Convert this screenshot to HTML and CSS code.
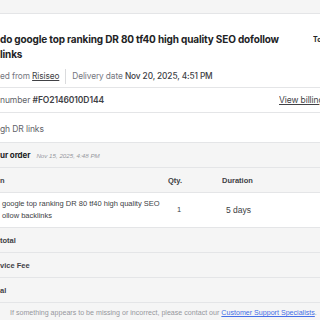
FILE: index.html
```html
<!DOCTYPE html>
<html>
<head>
<meta charset="utf-8">
<link rel="stylesheet" href="styles.css">
</head>
<body>
<div class="topbar"></div>
<header class="head">
  <div class="title-row">
    <h1 class="title">do google top ranking DR 80 tf40 high quality SEO dofollow<br>links</h1>
    <span class="to">To</span>
  </div>
  <div class="meta">
    <span class="meta-item">ed from <a class="seller" href="#">Risiseo</a></span>
    <span class="sep"></span>
    <span class="meta-item">Delivery date <span class="strong">Nov 20, 2025, 4:51 PM</span></span>
  </div>
</header>
<div class="row row-number">
  <span>number <span class="strong">#FO2146010D144</span></span>
  <a class="billing" href="#">View billing</a>
</div>
<div class="row row-pkg">gh DR links</div>
<section class="order">
  <div class="order-head"><span class="order-title">ur order</span><span class="order-date">Nov 15, 2025, 4:48 PM</span></div>
  <div class="table">
    <div class="tr th">
      <div class="c-item">n</div>
      <div class="c-qty">Qty.</div>
      <div class="c-dur">Duration</div>
    </div>
    <div class="tr item">
      <div class="c-item">google top ranking DR 80 tf40 high quality SEO<br>ollow backlinks</div>
      <div class="c-qty">1</div>
      <div class="c-dur">5 days</div>
    </div>
    <div class="tr sum">total</div>
    <div class="tr sum">vice Fee</div>
    <div class="tr sum">al</div>
  </div>
  <p class="footer">If something appears to be missing or incorrect, please contact our <a class="support" href="#">Customer Support Specialists</a>.</p>
</section>
</body>
</html>
```
FILE: styles.css
```css
html, body { margin: 0; padding: 0; }
body {
  width: 320px;
  height: 320px;
  overflow: hidden;
  background: #fff;
  font-family: Inter, "Liberation Sans", sans-serif;
  color: #404145;
}
.topbar {
  height: 13px;
  background: #f5f5f5;
  border-bottom: 1px solid #e4e5e7;
}
.head { padding: 18px 0 0 0; }
.title-row { display: flex; justify-content: space-between; }
.title {
  margin: 0;
  font-size: 10px;
  line-height: 15px;
  font-weight: 700;
  letter-spacing: -0.15px;
  color: #222325;
  white-space: nowrap;
}
.to {
  font-size: 7px;
  font-weight: 700;
  padding-top: 3px;
  color: #222325;
  white-space: nowrap;
  overflow: hidden;
  width: 7px;
}
.meta {
  display: flex;
  align-items: center;
  height: 16px;
  margin-top: 6px;
  margin-bottom: 3px;
  font-size: 8.3px;
  letter-spacing: -0.1px;
  color: #74767e;
}
.seller { color: #404145; text-decoration: underline; }
.sep {
  width: 1px;
  height: 15px;
  background: #dadbdd;
  margin: 0 6px;
}
.strong { color: #404145; font-weight: 500; }
.row {
  border-top: 1px solid #e4e5e7;
  font-size: 8.5px;
  letter-spacing: -0.1px;
  color: #62646a;
  display: flex;
  align-items: center;
  justify-content: space-between;
}
.row-number { height: 24px; }
.row-number .strong { font-weight: 600; }
.billing { color: #404145; text-decoration: underline; white-space: nowrap; width: 41px; overflow: hidden; }
.row-pkg { height: 30px; padding-top: 2px; box-sizing: border-box; }
.order {
  background: #f5f5f5;
  border-top: 1px solid #e4e5e7;
  padding-bottom: 4px;
}
.order-head {
  height: 24px;
  display: flex;
  align-items: center;
  gap: 6px;
}
.order-title { font-size: 8px; font-weight: 700; color: #222325; letter-spacing: -0.1px; }
.order-date { font-family: "Liberation Sans", Arial, sans-serif; font-size: 6.2px; font-style: italic; color: #95979d; }
.table {
  font-family: "Liberation Sans", Arial, sans-serif;
  font-size: 7.5px;
  color: #404145;
}
.tr {
  display: flex;
  align-items: center;
  border-top: 1px solid #e4e5e7;
}
.th { height: 24px; font-weight: 700; }
.item { background: #fff; height: 34px; line-height: 12px; }
.c-item { width: 168px; }
.item .c-item { padding-left: 2px; width: 166px; }
.c-qty { width: 54px; }
.item .c-qty { padding-left: 9px; width: 47px; }
.c-dur { flex: 1; }
.item .c-dur { font-size: 8.5px; padding-left: 2px; }
.sum { height: 24px; font-weight: 700; }
.sum:last-child { border-bottom: 1px solid #e4e5e7; }
.footer {
  margin: 0;
  padding: 6px 0 0 10px;
  font-family: "Liberation Sans", Arial, sans-serif;
  font-size: 7.1px;
  color: #95979d;
  white-space: nowrap;
}
.support { color: #446ee7; text-decoration: underline; }
```
